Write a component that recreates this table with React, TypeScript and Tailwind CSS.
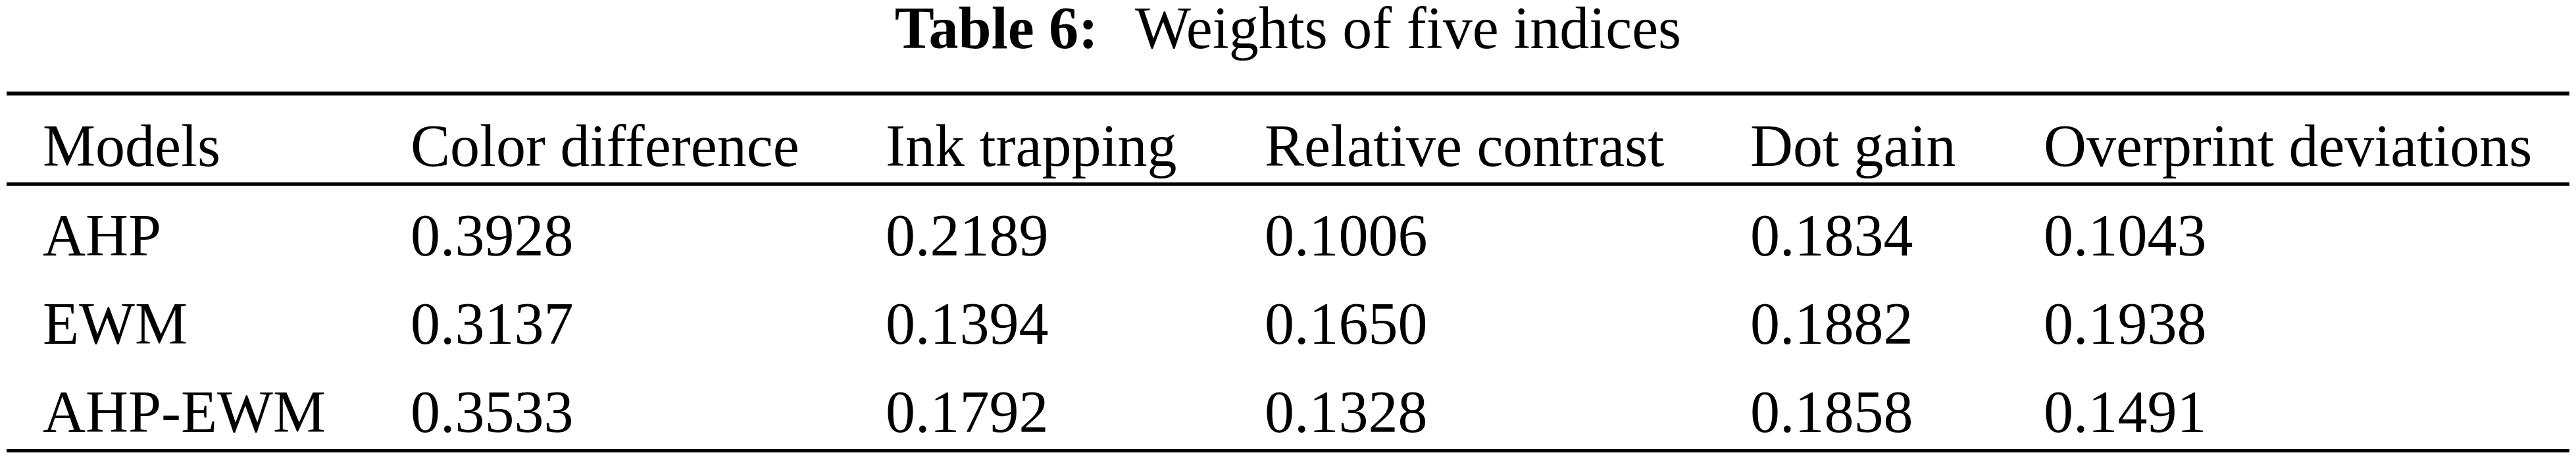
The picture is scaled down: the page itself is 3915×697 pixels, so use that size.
import React from 'react';

const headers = ['Models', 'Color difference', 'Ink trapping', 'Relative contrast', 'Dot gain', 'Overprint deviations'];

const rows: string[][] = [
  ['AHP', '0.3928', '0.2189', '0.1006', '0.1834', '0.1043'],
  ['EWM', '0.3137', '0.1394', '0.1650', '0.1882', '0.1938'],
  ['AHP-EWM', '0.3533', '0.1792', '0.1328', '0.1858', '0.1491'],
];

const gridCols = 'grid grid-cols-[559px_722px_576px_738px_446px_1fr] pl-[55px]';

const App: React.FC = () => {
  return (
    <div className="w-[3915px] h-[697px] bg-white text-black overflow-hidden font-['Liberation_Serif','Times_New_Roman',serif]">
      <div className="text-center text-[90px] leading-[86px] whitespace-nowrap">
        <span className="font-bold">Table 6:</span>
        <span className="ml-[56px]">Weights of five indices</span>
      </div>

      <div className="mx-[10px] mt-[53px] text-[90px] leading-[90px] whitespace-nowrap">
        <div className="h-[6px] bg-black" />
        <div className={`${gridCols} pt-[32px] pb-[10px]`}>
          {headers.map((h) => (
            <div key={h}>{h}</div>
          ))}
        </div>
        <div className="h-[5px] bg-black" />
        <div className="flex flex-col gap-[44px] pt-[31px] pb-[11px]">
          {rows.map((r) => (
            <div key={r[0]} className={gridCols}>
              {r.map((c, i) => (
                <div key={i}>{c}</div>
              ))}
            </div>
          ))}
        </div>
        <div className="h-[5px] bg-black" />
      </div>
    </div>
  );
};

export default App;
